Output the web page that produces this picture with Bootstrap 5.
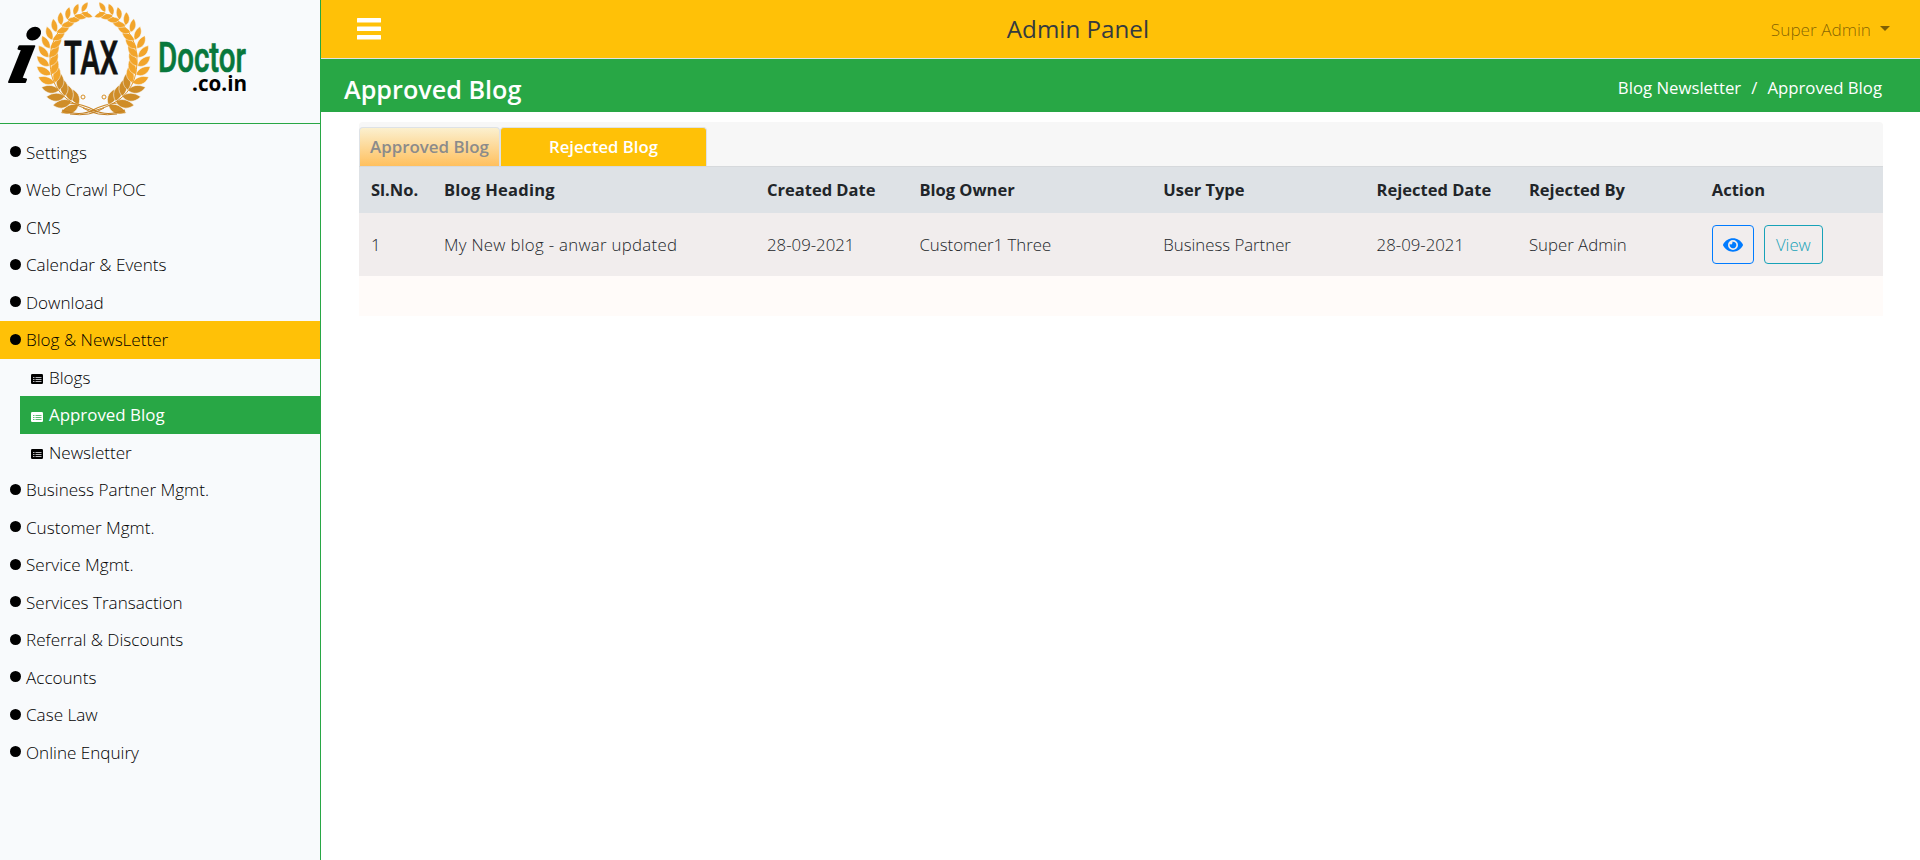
<!DOCTYPE html>
<html lang="en">
<head>
<meta charset="utf-8">
<title>Approved Blog - Admin Panel</title>
<link href="https://cdn.jsdelivr.net/npm/bootstrap@5.3.0/dist/css/bootstrap.min.css" rel="stylesheet">
<style>
body{font-family:"Open Sans","Noto Sans",sans-serif;font-size:16.8px;font-weight:340;color:#212529;line-height:27px;overflow:hidden}
.side{width:321px;border-right:1px solid #28a745;background:#f8fafc}
.brand-box{height:124px;border-bottom:1px solid #28a745}
.side-menu{padding-top:9.5px;font-size:17.1px}
.side-link{display:flex;align-items:center;height:37.5px;padding-left:10px;color:#000;text-decoration:none;white-space:nowrap}
.side-link .dot{width:11px;height:11px;border-radius:50%;background:#000;margin-right:5px;margin-top:-1px}
.side-link.open{background:#ffc107}
.sub-menu{padding-left:20px}
.sub-menu .side-link{padding-left:11px}
.sub-menu svg{margin-right:6px;margin-top:4px}
.sub-menu .side-link.active{background:#28a745;color:#fff;font-weight:400;font-size:16.9px}
.topbar{height:59px;background:#ffc107;border-bottom:1px solid #dee2e6;padding:0 30px 0 35px}
.topbar h1{font-size:24.2px;font-weight:420;color:#343a40;padding-left:3px}
.user-menu{color:rgba(0,0,0,.5);text-decoration:none;font-size:17.2px}
.user-menu::after{margin-left:9px;border-width:5.4px 5.4px 0}
.titlebar{height:53px;background:#28a745;color:#fff;padding:7px 38px 0 23px}
.titlebar h2{font-size:25.2px;font-weight:600}
.titlebar nav{font-weight:400;font-size:16.75px;margin-top:-3px}
.crumb-sep{padding:0 10px}
.blog-card{margin:10px 37px 0 38px;border-radius:4px 4px 0 0;background:#fffbf9;overflow:hidden;height:194px}
.tab-strip{background:#f7f7f7;padding-top:5px;height:45px;border-bottom:1px solid #d6d9dc}
.tab-item{height:39px;border:1px solid #dee2e6;border-bottom:0;border-radius:4px 4px 0 0;font-weight:600;font-size:16.7px;padding-bottom:1px;display:flex;align-items:center;justify-content:center;text-decoration:none;white-space:nowrap}
.tab-old{width:141px;background:linear-gradient(#fbf0cf,#ffc05e);color:#8b8b8b;font-size:16.9px}
.tab-now{width:207px;background:#ffc107;color:#fff}
.blog-table{table-layout:fixed;width:100%}
.blog-table th,.blog-table td{padding:0 0 0 12px;white-space:nowrap;vertical-align:middle}
.blog-table th{height:46px;background:#dee2e6;font-weight:700;font-size:16.5px;padding-bottom:1px}
.blog-table td{height:63px;background:#f1eded}
.blog-table th.name-head{letter-spacing:.25px}
.blog-name{letter-spacing:.3px}
.btn-act{height:39px;border:1px solid;border-radius:4px;display:flex;align-items:center;justify-content:center;text-decoration:none}
.act-group{gap:10px}
.act-eye{width:42px;color:#007bff}
.act-view{width:59px;color:#17a2b8}
</style>
</head>
<body>
<div class="d-flex vh-100">
<aside class="side flex-shrink-0">
<div class="brand-box">
<svg width="260" height="122" viewBox="0 0 260 122">
<defs><linearGradient id="gold" gradientUnits="userSpaceOnUse" x1="0" y1="5" x2="0" y2="116"><stop offset="0" stop-color="#f5a623"/><stop offset=".6" stop-color="#f0a32c"/><stop offset="1" stop-color="#c07d20"/></linearGradient></defs>
<g id="wreath" stroke="url(#gold)" fill="none"></g>
<text transform="translate(7 82) skewX(-12)" font-family="Liberation Serif" font-weight="700" font-style="italic" font-size="78" textLength="23" lengthAdjust="spacingAndGlyphs" stroke="#000" stroke-width="2" stroke-linejoin="round">i</text>
<text x="64" y="73.500" font-family="Roboto" font-weight="500" font-size="46" textLength="54" lengthAdjust="spacingAndGlyphs" fill="#111" stroke="#111" stroke-width=".8">TAX</text>
<text x="158" y="72" font-family="Roboto" font-weight="500" font-size="42" textLength="88" lengthAdjust="spacingAndGlyphs" fill="#08783c" stroke="#08783c" stroke-width=".7">Doctor</text>
<text x="192" y="91" font-family="Open Sans" font-weight="700" font-size="22" textLength="55" lengthAdjust="spacingAndGlyphs" fill="#000">.co.in</text>
</svg>
</div>
<nav class="side-menu" id="menu"></nav>
</aside>
<main class="flex-grow-1">
<header class="topbar d-flex justify-content-between align-items-center">
<svg width="26" height="24" viewBox="0 0 26 24" fill="#fff"><rect x="1" y="1" width="24" height="4.500" rx=".5"/><rect x="1" y="9.500" width="24" height="4.500" rx=".5"/><rect x="1" y="18" width="24" height="4.500" rx=".5"/></svg>
<h1 class="m-0">Admin Panel</h1>
<a class="user-menu dropdown-toggle" href="#">Super Admin</a>
</header>
<div class="titlebar d-flex justify-content-between align-items-center">
<h2 class="m-0">Approved Blog</h2>
<nav>Blog Newsletter<span class="crumb-sep">/</span>Approved Blog</nav>
</div>
<section class="blog-card">
<div class="tab-strip d-flex"><a class="tab-item tab-old" href="#">Approved Blog</a><a class="tab-item tab-now" href="#">Rejected Blog</a></div>
<table class="blog-table">
<colgroup><col style="width:73px"><col style="width:323px"><col style="width:10%"><col style="width:16%"><col style="width:14%"><col style="width:10%"><col style="width:12%"><col></colgroup>
<thead><tr><th>Sl.No.</th><th class="name-head">Blog Heading</th><th>Created Date</th><th>Blog Owner</th><th>User Type</th><th>Rejected Date</th><th>Rejected By</th><th>Action</th></tr></thead>
<tbody><tr><td>1</td><td class="blog-name">My New blog - anwar updated</td><td>28-09-2021</td><td>Customer1 Three</td><td>Business Partner</td><td>28-09-2021</td><td>Super Admin</td>
<td><div class="d-flex act-group"><a class="btn-act act-eye" href="#"><svg width="20" height="18" viewBox="0 0 576 512" fill="currentColor"><path d="M572.500 241.400C518.300 135.600 410.900 64 288 64S57.700 135.600 3.500 241.400a32.400 32.400 0 0 0 0 29.200C57.700 376.400 165.100 448 288 448s230.300-71.600 284.500-177.400a32.400 32.400 0 0 0 0-29.200zM288 400a144 144 0 1 1 144-144 143.900 143.900 0 0 1-144 144zm0-240a95.300 95.300 0 0 0-25.300 3.800 47.900 47.900 0 0 1-66.900 66.900A95.800 95.800 0 1 0 288 160z"/></svg></a><a class="btn-act act-view" href="#">View</a></div></td></tr></tbody>
</table>
</section>
</main>
</div>
<script src="https://cdn.jsdelivr.net/npm/bootstrap@5.3.0/dist/js/bootstrap.bundle.min.js"></script>
<script>
const items=['Settings','Web Crawl POC','CMS','Calendar & Events','Download','Blog & NewsLetter','Business Partner Mgmt.','Customer Mgmt.','Service Mgmt.','Services Transaction','Referral & Discounts','Accounts','Case Law','Online Enquiry'];
const listIcon=c=>`<svg width="12" height="10" viewBox="0 0 12 10"><rect width="12" height="10" rx="1.200" fill="currentColor"/><path d="M2 3.500h1.500M4.500 3.500h6M2 5.500h1.500M4.500 5.500h6M2 7.500h1.500M4.500 7.500h6" stroke="${c}" stroke-width="1" opacity=".75"/></svg>`;
document.getElementById('menu').innerHTML=items.map(t=>{
 const open=t.startsWith('Blog');
 let h=`<a class="side-link${open?' open':''}" href="#"><span class="dot"></span>${t.replace('&','&amp;')}</a>`;
 if(open)h+='<div class="sub-menu">'+['Blogs','Approved Blog','Newsletter'].map(s=>`<a class="side-link${s[0]=='A'?' active':''}" href="#">${listIcon(s[0]=='A'?'#28a745':'#f8f9fc')}${s}</a>`).join('')+'</div>';
 return h;}).join('');
// laurel wreath: pairs of leaves along two mirrored arcs
const leaf='M0 0C3 -5 9 -6 14 -1C9 3 4 3 0 0Z';
let half='';
for(let i=0;i<15;i++){
 const a=(108+i*10.6)*Math.PI/180,rx=43,ry=48,s=1.55-i*.045;
 const x=92+rx*Math.cos(a),y=59+ry*Math.sin(a);
 const d=Math.atan2(ry*Math.cos(a),-rx*Math.sin(a))*180/Math.PI;
 for(const k of [-40,34]) half+=`<path transform="translate(${x.toFixed(1)} ${y.toFixed(1)}) rotate(${(d+k).toFixed(0)}) scale(${(s*.9).toFixed(2)} ${(k<0?s*.85:-s*.85).toFixed(2)})" d="${leaf}" fill="${i<4?'#cf8d28':'#f2a52b'}" stroke="#f8fafc" stroke-width=".4"/>`;
}
half+='<path d="M98 112C62 104 50 86 50 60C50 36 66 17 88 12" stroke-width="1"/><path d="M62 110Q80 117 93 110Q104 104 118 103" stroke-width="1.200"/><path d="M70 114Q90 117 104 108" stroke-width="1"/><circle cx="83" cy="97" r="2" stroke-width="1"/>';
document.getElementById('wreath').innerHTML=half+`<g transform="translate(187 0) scale(-1 1)">${half}</g>`;
</script>
</body>
</html>
